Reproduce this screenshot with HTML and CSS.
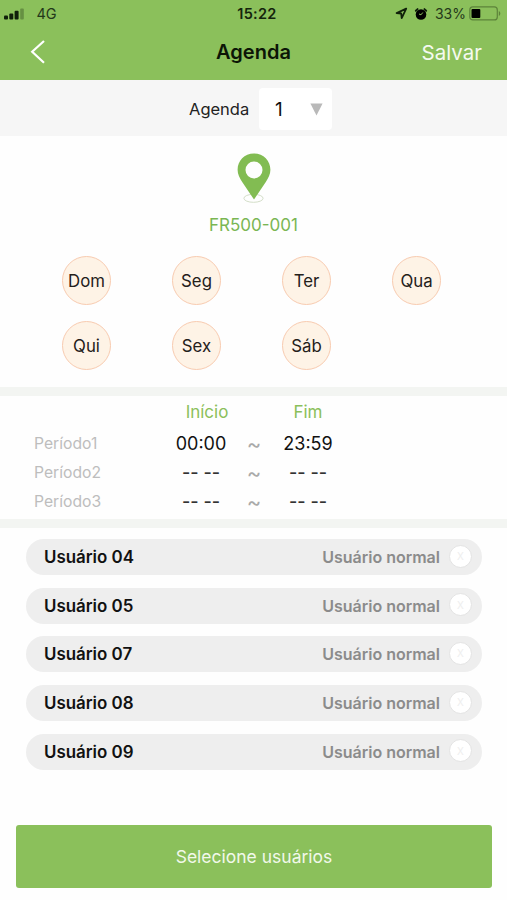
FILE: index.html
```html
<!DOCTYPE html>
<html lang="pt-BR">
<head>
<meta charset="utf-8">
<title>Agenda</title>
<link rel="stylesheet" href="styles.css">
</head>
<body>
<div class="screen">
  <header class="header">
    <div class="status">
      <div class="status-left">
        <svg class="signal" width="20" height="12" viewBox="0 0 20 12"><rect x="0" y="7.5" width="4" height="4" rx="1"/><rect x="5.3" y="5.5" width="4" height="6" rx="1"/><rect x="10.6" y="2.7" width="4" height="8.8" rx="1"/><rect x="16.2" y=".5" width="3.6" height="11" rx="1" opacity=".3"/></svg>
        <span class="carrier">4G</span>
      </div>
      <span class="clock">15:22</span>
      <div class="status-right">
        <svg width="13" height="13" viewBox="0 0 13 13"><path d="M11.2 1.6 1.6 6.1 6.2 6.5 6.7 11.2Z" fill="none" stroke="#10200a" stroke-width="1.8" stroke-linejoin="round"/></svg>
        <svg class="alarm" width="14" height="14" viewBox="0 0 14 14"><circle cx="7" cy="7.5" r="5.3"/><path d="M1.8 3.8 3.6 2.1M12.2 3.8 10.4 2.1" stroke="#10200a" stroke-width="1.9" stroke-linecap="round"/><path d="M8.8 5.5 7 7.8 5 7" fill="none" stroke="#8bc05b" stroke-width="1"/></svg>
        <span class="percent">33%</span>
        <svg class="battery" width="33" height="15" viewBox="0 0 33 15"><rect x=".8" y=".9" width="27.5" height="13" rx="3" fill="none" stroke="#5d833a" stroke-width="1.2"/><rect x="2.5" y="2.9" width="8.8" height="9" rx="1"/><path d="M29.8 5v5c2-.7 2-4.3 0-5Z" fill="#5d833a"/></svg>
      </div>
    </div>
    <nav class="nav">
      <svg class="back" width="16" height="26" viewBox="0 0 16 26"><path d="M14 2 2.2 12.8 14 23.8" fill="none" stroke="#fff" stroke-width="2.2"/></svg>
      <h1 class="title">Agenda</h1>
      <span class="save">Salvar</span>
    </nav>
  </header>
  <section class="picker">
    <span class="picker-label">Agenda</span>
    <div class="select"><span>1</span><svg width="13" height="13" viewBox="0 0 13 13"><path d="M.4.5h12.2L6.5 12.5Z" fill="#b9b9b9"/></svg></div>
  </section>
  <section class="device">
    <svg class="pin" width="36" height="51" viewBox="0 0 36 51"><ellipse cx="17.5" cy="45.3" rx="9.6" ry="4" fill="none" stroke="#d3dec8" stroke-width="1"/><path fill-rule="evenodd" d="M18 .4C8.3.4 1.6 7.6 1.6 16.8c0 4.4 2 8 4.6 12.2L18 46.5 29.8 29c2.6-4.2 4.6-7.8 4.6-12.2C34.4 7.6 27.7.4 18 .4Zm0 8.1a8.5 8.5 0 1 1 0 17 8.5 8.5 0 0 1 0-17Z" fill="#82bc52"/></svg>
    <span class="device-name">FR500-001</span>
  </section>
  <section class="days">
    <span class="day">Dom</span><span class="day">Seg</span><span class="day">Ter</span><span class="day">Qua</span>
    <span class="day">Qui</span><span class="day">Sex</span><span class="day">Sáb</span>
  </section>
  <section class="periods">
    <div class="period head"><span></span><span class="start">Início</span><span></span><span>Fim</span></div>
    <div class="period"><span class="label">Período1</span><span class="time">00:00</span><span class="tilde">~</span><span class="time">23:59</span></div>
    <div class="period"><span class="label">Período2</span><span class="time empty">-- --</span><span class="tilde">~</span><span class="time empty">-- --</span></div>
    <div class="period"><span class="label">Período3</span><span class="time empty">-- --</span><span class="tilde">~</span><span class="time empty">-- --</span></div>
  </section>
  <section class="users">
    <div class="user"><span class="name">Usuário 04</span><span class="role">Usuário normal</span><span class="remove">X</span></div>
    <div class="user"><span class="name">Usuário 05</span><span class="role">Usuário normal</span><span class="remove">X</span></div>
    <div class="user"><span class="name">Usuário 07</span><span class="role">Usuário normal</span><span class="remove">X</span></div>
    <div class="user"><span class="name">Usuário 08</span><span class="role">Usuário normal</span><span class="remove">X</span></div>
    <div class="user"><span class="name">Usuário 09</span><span class="role">Usuário normal</span><span class="remove">X</span></div>
  </section>
  <button class="submit">Selecione usuários</button>
</div>
</body>
</html>
```

FILE: styles.css
```css
* { box-sizing: border-box; }
body { margin: 0; background: #fefefe; font-family: Inter, "Liberation Sans", sans-serif; color: #111; }
svg { display: block; flex: none; }
.screen { width: 507px; height: 900px; display: flex; flex-direction: column; overflow: hidden; }
.header { height: 79.5px; flex: none; background: #8bc05b; }
.status { height: 27px; display: grid; grid-template-columns: 229px 48px 1fr; align-items: center; padding: 0 7px 0 4px; }
.status-left { display: flex; align-items: center; gap: 12.5px; }
.signal { fill: #10200a; }
.carrier { font-size: 14.5px; color: #24381a; }
.clock { font-size: 14.5px; font-weight: 600; letter-spacing: .3px; color: #14240c; text-align: center; }
.status-right { display: flex; align-items: center; justify-content: flex-end; }
.alarm { margin: 0 7px 0 6px; }
.percent { font-size: 14px; color: #24381a; margin-right: 3px; }
.battery { margin-right: -2px; }
.nav { height: 50px; display: grid; grid-template-columns: 1fr auto 1fr; align-items: center; padding: 0 25px 0 29px; }
.back { margin-left: 1px; }
.title { margin: 0 0 0 -4px; font-size: 20px; font-weight: 600; color: #0c1506; }
.save { justify-self: end; font-size: 20.5px; color: #f5faf0; }
.picker { height: 56.5px; flex: none; background: #f6f6f6; display: flex; align-items: center; padding: 2px 0 0 189px; gap: 10px; }
.picker-label { font-size: 16.5px; color: #222; width: 60px; padding-top: 1px; }
.select { width: 73px; height: 42px; border-radius: 4px; background: #fff; display: flex; align-items: center; justify-content: space-between; padding: 1px 9px 0 16px; font-size: 19px; }
.device { height: 121px; flex: none; display: flex; flex-direction: column; align-items: center; padding-top: 17px; }
.device-name { margin-top: 10px; font-size: 17px; line-height: 22px; color: #7ab653; }
.days { height: 131px; flex: none; display: grid; grid-template-columns: repeat(4, 110px); justify-content: center; justify-items: center; grid-auto-rows: 49px; row-gap: 16px; padding-right: 4px; margin-top: -1px; }
.day { width: 49px; height: 49px; border: 1.5px solid #f8cbb0; border-radius: 50%; background: #fef3e6; display: flex; align-items: center; justify-content: center; font-size: 16.8px; color: #24201a; }
.periods { height: 141px; flex: none; border: solid #f3f5f2; border-width: 9px 0; display: flex; flex-direction: column; padding-left: 34px; }
.period { height: 29px; display: grid; grid-template-columns: 115px 104px 2px 106px; align-items: center; justify-items: center; font-size: 18px; }
.period.head { height: 32px; margin-bottom: 1px; font-size: 17px; color: #8bc05b; }
.start { padding-left: 12px; }
.label { justify-self: start; font-size: 15.7px; color: #bdbdbd; }
.tilde { color: #aaa; font-size: 22px; }
.empty { color: #333; font-weight: 500; }
.users { display: flex; flex-direction: column; gap: 12.7px; padding: 11px 25px 0 26px; }
.user { height: 36px; flex: none; border-radius: 18px; background: #eee; display: flex; align-items: center; padding: 0 10px 0 18px; font-weight: 600; }
.name { font-size: 16.9px; }
.role { margin-left: auto; font-size: 16px; color: #8b8b8b; }
.remove { width: 23px; height: 23px; margin: -2px 0 0 9px; border: 1px solid #e3e3e3; border-radius: 50%; background: #fff; color: #eee; font-size: 10px; font-weight: 400; display: flex; align-items: center; justify-content: center; }
.submit { margin: auto 15px 12.5px 16px; height: 62.5px; flex: none; border: 0; border-radius: 3px; background: #8bc05b; color: #f1f8ea; font: 400 17.5px Inter, "Liberation Sans", sans-serif; }
```
